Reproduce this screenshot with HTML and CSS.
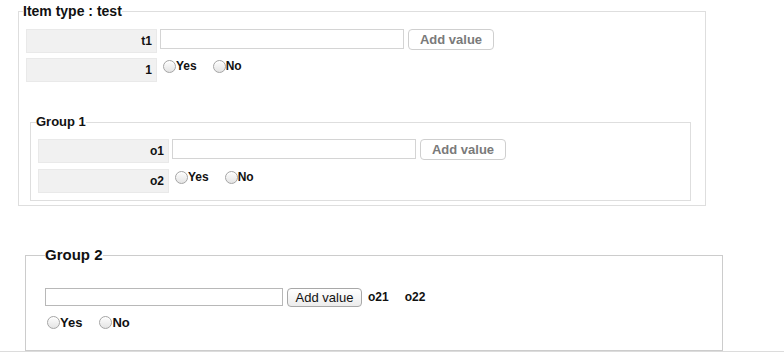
FILE: index.html
```html
<!DOCTYPE html>
<html lang="en">
	<head>
		<meta charset="UTF-8" />
		<title>Item type : test</title>
		<link rel="stylesheet" href="styles.css">
	</head>
	<body>
		<div class="page">
			<fieldset class="item-type">
				<legend>Item type : test</legend>

				<div class="field-row">
					<div class="field-label">t1</div>
					<input class="text-input" type="text" />
					<button class="add-btn" type="button">Add value</button>
				</div>
				<div class="field-row second">
					<div class="field-label">1</div>
					<div class="choices">
						<label class="choice"><input type="radio" name="f1" />Yes</label>
						<label class="choice"><input type="radio" name="f1" />No</label>
					</div>
				</div>

				<fieldset class="group">
					<legend>Group 1</legend>
					<div class="field-row">
						<div class="field-label">o1</div>
						<input class="text-input" type="text" />
						<button class="add-btn" type="button">Add value</button>
					</div>
					<div class="field-row second">
						<div class="field-label">o2</div>
						<div class="choices">
							<label class="choice"><input type="radio" name="o2" />Yes</label>
							<label class="choice"><input type="radio" name="o2" />No</label>
						</div>
					</div>
				</fieldset>
			</fieldset>

			<fieldset class="group-two">
				<legend>Group 2</legend>
				<div class="plain-row">
					<input class="plain-input" type="text" />
					<button class="native-btn" type="button">Add value</button>
					<span class="col-name">o21</span>
					<span class="col-name">o22</span>
				</div>
				<div class="choices plain">
					<label class="choice big"><input type="radio" name="g2" />Yes</label>
					<label class="choice big"><input type="radio" name="g2" />No</label>
				</div>
			</fieldset>
		</div>
	</body>
</html>
```

FILE: styles.css
```css
body {
	margin: 0;
	font-family: "Liberation Sans", Arial, sans-serif;
	color: #111;
	background: #fff;
}

.page {
	border-bottom: 1px solid #dcdcdc;
	padding-top: 4px;
}

fieldset {
	margin: 0;
	padding: 0;
	min-width: 0;
	box-sizing: border-box;
}

legend {
	padding: 0;
	font-weight: bold;
}

.item-type {
	margin-left: 18px;
	width: 688px;
	border: 1px solid #dedede;
	padding: 0 14px 4px 7px;
}

.item-type > legend {
	margin-left: -3px;
	font-size: 14px;
	line-height: 14px;
}

.item-type > .field-row:first-of-type {
	margin-top: 11px;
}

.field-row {
	display: flex;
	align-items: flex-start;
	gap: 3px;
}

.field-row.second {
	margin-top: 5px;
}

.field-label {
	width: 131px;
	height: 24px;
	box-sizing: border-box;
	background: #f1f1f1;
	border: 1px solid #e9e9e9;
	font-size: 12px;
	font-weight: bold;
	line-height: 22px;
	text-align: right;
	padding-right: 4px;
}

.text-input {
	width: 244px;
	height: 20px;
	box-sizing: border-box;
	border: 1px solid #d4d4d4;
	margin: 0;
	padding: 0 3px;
	background: #fff;
}

.add-btn {
	margin: 0 0 0 1px;
	width: 86px;
	height: 21px;
	box-sizing: border-box;
	border: 1px solid #cfcfcf;
	border-radius: 4px;
	background: #fff;
	color: #7a7a7a;
	font-family: "Liberation Sans", Arial, sans-serif;
	font-size: 13px;
	font-weight: bold;
	padding: 0;
}

.choices {
	display: flex;
	gap: 16px;
	margin: 2px 0 0 3px;
}

.choice {
	display: flex;
	align-items: center;
	font-size: 12px;
	font-weight: bold;
	line-height: 13px;
}

.choice input {
	appearance: none;
	-webkit-appearance: none;
	width: 13px;
	height: 13px;
	margin: 0;
	box-sizing: border-box;
	border: 1px solid #a5a5a5;
	border-radius: 50%;
	background: linear-gradient(#fdfdfd, #e4e4e4);
	box-shadow: inset 0 1px 1px #fff;
}

.group {
	margin: 33px 0 0 4px;
	width: 661px;
	border: 1px solid #dedede;
	padding: 0 0 7px 7px;
}

.group > legend {
	margin-left: -2px;
	font-size: 13px;
	line-height: 14px;
}

.group > .field-row:first-of-type {
	margin-top: 10px;
}

.group > .field-row.second {
	margin-top: 6px;
}

.group-two {
	margin: 41px 0 0 25px;
	width: 698px;
	border: 1px solid #cccccc;
	padding: 0 0 21px 19px;
}

.group-two > legend {
	font-size: 15px;
	line-height: 16px;
}

.plain-row {
	display: flex;
	align-items: center;
	margin-top: 23px;
}

.plain-input {
	width: 238px;
	height: 18px;
	box-sizing: border-box;
	border: 1px solid #b8b8b8;
	margin: 0;
	padding: 0 3px;
}

.native-btn {
	margin: 2px 0 0 4px;
	width: 75px;
	height: 19px;
	box-sizing: border-box;
	border: 1px solid #a8a8a8;
	border-radius: 4px;
	background: linear-gradient(#ffffff, #ececec);
	color: #111;
	font-family: "Liberation Sans", Arial, sans-serif;
	font-size: 13px;
	padding: 0;
}

.col-name {
	font-size: 12px;
	font-weight: bold;
	margin-left: 6px;
}

.col-name + .col-name {
	margin-left: 16px;
}

.choices.plain {
	margin: 9px 0 0 2px;
	gap: 17px;
}

.choice.big {
	font-size: 13px;
}
```
